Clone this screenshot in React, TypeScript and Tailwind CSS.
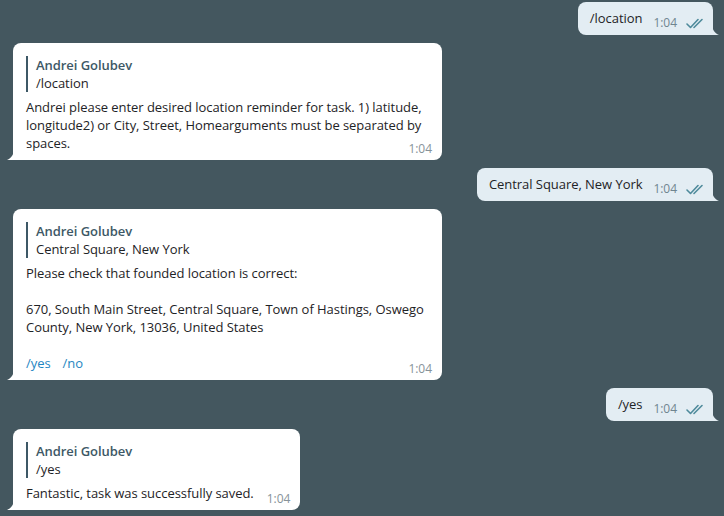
import React from 'react'

function Checks() {
  return (
    <svg width="18" height="11" viewBox="0 0 18 11" fill="none" className="shrink-0">
      <path d="M1 6 L4.5 9.5 L12 1.5" stroke="#4e8a9b" strokeWidth="1.6" strokeLinecap="round" strokeLinejoin="round" />
      <path d="M8 9.5 L16 1.5" stroke="#4e8a9b" strokeWidth="1.6" strokeLinecap="round" />
    </svg>
  )
}

function TailLeft() {
  return (
    <svg width="7" height="11" viewBox="0 0 7 11" className="absolute -left-[6px] bottom-0">
      <path d="M7 0 C7 5 4.5 9 0 11 L7 11 Z" fill="#ffffff" />
    </svg>
  )
}

function TailRight() {
  return (
    <svg width="7" height="11" viewBox="0 0 7 11" className="absolute -right-[6px] bottom-0">
      <path d="M0 0 C0 5 2.5 9 7 11 L0 11 Z" fill="#e3edf3" />
    </svg>
  )
}

function Outgoing({ text }: { text: string }) {
  return (
    <div className="flex justify-end">
      <div className="relative flex items-end bg-[#e3edf3] rounded-lg rounded-br-none pl-[12px] pr-[9px] pt-[7px] pb-[8px]">
        <span className="leading-[18px] text-[#1e2326]">{text}</span>
        <span className="ml-[11px] text-[12px] leading-[14px] text-[#6f8590] translate-y-[3px]">1:04</span>
        <span className="ml-[9px] translate-y-[2px]"><Checks /></span>
        <TailRight />
      </div>
    </div>
  )
}

function Quote({ reply }: { reply: string }) {
  return (
    <div className="border-l-[2px] border-[#3d5866] pl-[8px] mb-[6px] leading-[18px]">
      <div className="font-semibold text-[#3d5866]">Andrei Golubev</div>
      <div className="text-[#1e2326]">{reply}</div>
    </div>
  )
}

function Incoming({ reply, children, wide = true }: { reply: string; children: React.ReactNode; wide?: boolean }) {
  return (
    <div className="flex justify-start">
      <div className={`relative bg-white rounded-lg rounded-bl-none pl-[13px] pt-[13px] pb-[8px] ${wide ? 'w-[429px] pr-[10px]' : 'pr-[10px]'}`}>
        <Quote reply={reply} />
        {children}
        <TailLeft />
      </div>
    </div>
  )
}

export default function App() {
  return (
    <div className="min-h-screen w-full bg-[#44575f] pt-[2px] pl-[13px] pr-[11px] pb-2 text-[13px] font-['Open_Sans',sans-serif] tracking-[-0.05px]">
      <div className="flex flex-col gap-2">
        <Outgoing text="/location" />

        <Incoming reply="/location">
          <div className="leading-[18px] text-[#1e2326]">
            <div>Andrei please enter desired location reminder for task. 1) latitude,</div>
            <div>longitude2) or City, Street, Homearguments must be separated by</div>
            <div>spaces.</div>
          </div>
          <span className="absolute right-[10px] bottom-[4px] text-[12px] leading-[14px] text-[#87939a]">1:04</span>
        </Incoming>

        <Outgoing text="Central Square, New York" />

        <Incoming reply="Central Square, New York">
          <div className="leading-[18px] text-[#1e2326]">
            <div>Please check that founded location is correct:</div>
            <div className="h-[18px]" />
            <div>670, South Main Street, Central Square, Town of Hastings, Oswego</div>
            <div>County, New York, 13036, United States</div>
            <div className="h-[18px]" />
            <div className="flex gap-[12px] text-[#1f86c2]">
              <span>/yes</span>
              <span>/no</span>
            </div>
          </div>
          <span className="absolute right-[10px] bottom-[4px] text-[12px] leading-[14px] text-[#87939a]">1:04</span>
        </Incoming>

        <Outgoing text="/yes" />

        <Incoming reply="/yes" wide={false}>
          <div className="flex items-end">
            <span className="leading-[18px] text-[#1e2326]">Fantastic, task was successfully saved.</span>
            <span className="ml-[13px] text-[12px] leading-[14px] text-[#87939a] translate-y-[4px]">1:04</span>
          </div>
        </Incoming>
      </div>
    </div>
  )
}
